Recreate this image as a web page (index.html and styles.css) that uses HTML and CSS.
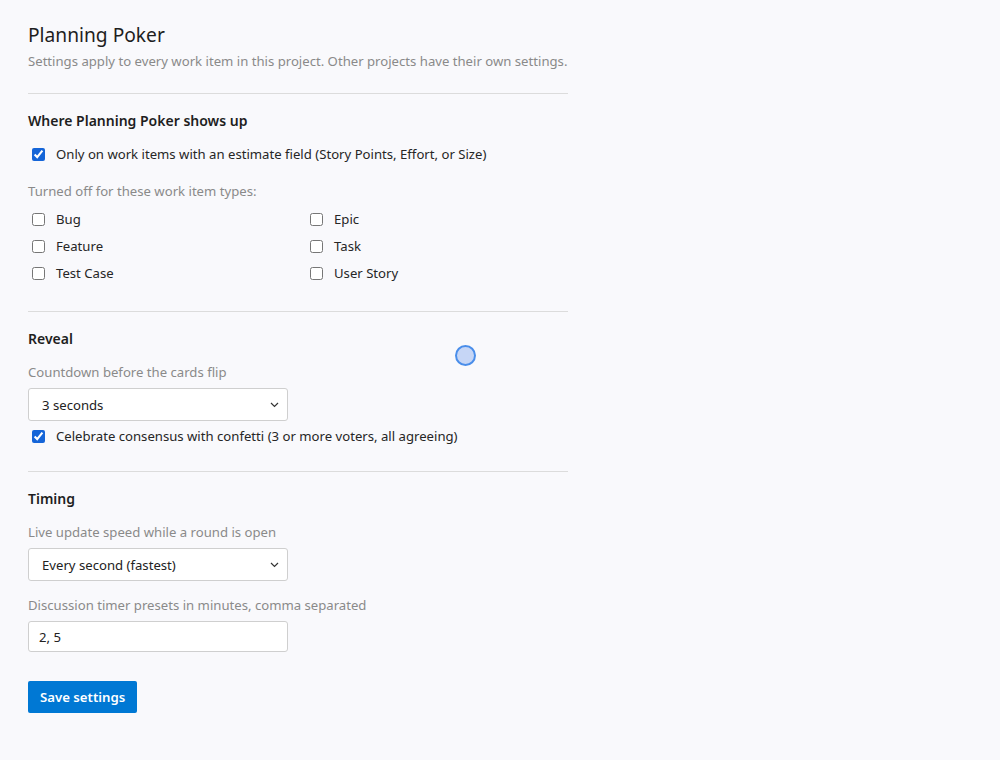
FILE: index.html
```html
<!DOCTYPE html>
<html lang="en">
<head>
    <meta charset="UTF-8">
    <meta name="viewport" content="width=device-width, initial-scale=1.0">
    <title>Planning Poker - Settings</title>
    <link rel="stylesheet" href="styles.css">
</head>
<body>

    <div class="settings">
        <h1>Planning Poker</h1>
        <p class="subtitle">Settings apply to every work item in this project. Other projects have their own settings.</p>

        <!-- Onde aparece -->
        <section class="secao">
            <h2>Where Planning Poker shows up</h2>
            <label class="check check-topo">
                <input type="checkbox" checked>
                <span>Only on work items with an estimate field (Story Points, Effort, or Size)</span>
            </label>

            <p class="rotulo rotulo-tipos">Turned off for these work item types:</p>
            <div class="tipos">
                <label class="check"><input type="checkbox"><span>Bug</span></label>
                <label class="check"><input type="checkbox"><span>Epic</span></label>
                <label class="check"><input type="checkbox"><span>Feature</span></label>
                <label class="check"><input type="checkbox"><span>Task</span></label>
                <label class="check"><input type="checkbox"><span>Test Case</span></label>
                <label class="check"><input type="checkbox"><span>User Story</span></label>
            </div>
        </section>

        <!-- Revelar -->
        <section class="secao">
            <h2>Reveal</h2>
            <label class="rotulo" for="countdown">Countdown before the cards flip</label>
            <div class="select-box">
                <select id="countdown">
                    <option>No countdown</option>
                    <option selected>3 seconds</option>
                    <option>5 seconds</option>
                </select>
                <svg class="chevron" width="9" height="6" viewBox="0 0 9 6"><path d="M1 1l3.5 3.5L8 1" fill="none" stroke="#333" stroke-width="1.2"/></svg>
            </div>
            <label class="check check-confete">
                <input type="checkbox" checked>
                <span>Celebrate consensus with confetti (3 or more voters, all agreeing)</span>
            </label>
        </section>

        <!-- Tempo -->
        <section class="secao ultima">
            <h2>Timing</h2>
            <label class="rotulo" for="velocidade">Live update speed while a round is open</label>
            <div class="select-box">
                <select id="velocidade">
                    <option selected>Every second (fastest)</option>
                    <option>Every 3 seconds</option>
                    <option>Every 10 seconds</option>
                </select>
                <svg class="chevron" width="9" height="6" viewBox="0 0 9 6"><path d="M1 1l3.5 3.5L8 1" fill="none" stroke="#333" stroke-width="1.2"/></svg>
            </div>

            <label class="rotulo rotulo-presets" for="presets">Discussion timer presets in minutes, comma separated</label>
            <input type="text" id="presets" class="campo" value="2, 5">
        </section>

        <button class="salvar">Save settings</button>
    </div>

    <!-- indicador de clique -->
    <div class="clique"></div>

</body>
</html>
```

FILE: styles.css
```css
body {
    margin: 0;
    background-color: #f9f9fc;
    font-family: "Noto Sans", "Open Sans", sans-serif;
    color: #222;
}

.settings {
    width: 540px;
    padding: 21px 28px 40px;
}

h1 {
    margin: 0;
    font-size: 19.2px;
    font-weight: 400;
    line-height: 28px;
    color: #1e1e1e;
}

.subtitle {
    margin: 2px 0 0;
    font-size: 13.15px;
    line-height: 20px;
    color: #8a8a8a;
}

/* Cada bloco começa com a linha divisória */
.secao {
    border-top: 1px solid #dcdcdc;
    margin-top: 22px;
    padding-top: 16px;
    padding-bottom: 4px;
}

.secao + .secao {
    margin-top: 0;
}

.secao h2 {
    margin: 0;
    font-size: 14px;
    font-weight: 600;
    line-height: 22px;
    color: #1e1e1e;
}

.rotulo {
    display: block;
    margin: 12px 0 0;
    font-size: 13.15px;
    line-height: 20px;
    color: #8a8a8a;
}

.rotulo-tipos {
    margin-top: 17px;
}

.rotulo-presets {
    margin-top: 14px;
}

.check {
    display: flex;
    align-items: center;
    height: 20px;
    font-size: 13.15px;
    line-height: 20px;
    color: #262626;
}

.check input {
    width: 13px;
    height: 13px;
    margin: 0 11px 0 4px;
    accent-color: #1565d8;
}

.check-topo {
    margin-top: 12px;
}

.check-confete {
    margin-top: 5px;
    margin-bottom: 21px;
}

/* Tipos de item em duas colunas */
.tipos {
    display: grid;
    grid-template-columns: 1fr 1fr;
    column-gap: 16px;
    row-gap: 7px;
    margin-top: 8px;
    margin-bottom: 24px;
}

.select-box {
    position: relative;
    width: 260px;
    margin-top: 6px;
}

.select-box select {
    appearance: none;
    width: 260px;
    height: 33px;
    padding: 0 30px 0 13px;
    border: 1px solid #cfcfcf;
    border-radius: 3px;
    background-color: #fff;
    font-family: inherit;
    font-size: 13.15px;
    color: #222;
}

.chevron {
    position: absolute;
    right: 9px;
    top: 14px;
}

.campo {
    display: block;
    box-sizing: border-box;
    width: 260px;
    height: 31px;
    margin-top: 6px;
    padding: 0 10px;
    border: 1px solid #cfcfcf;
    border-radius: 3px;
    background-color: #fff;
    font-family: inherit;
    font-size: 13.15px;
    color: #222;
}

.ultima {
    padding-bottom: 0;
}

.salvar {
    margin-top: 29px;
    height: 32px;
    padding: 0 12px;
    border: none;
    border-radius: 2px;
    background-color: #0078d4;
    color: white;
    font-family: inherit;
    font-size: 13.2px;
    font-weight: 600;
}

.clique {
    position: absolute;
    left: 455px;
    top: 345px;
    width: 17px;
    height: 17px;
    border: 2px solid #4a8eea;
    border-radius: 50%;
    background-color: #c6d6f6;
}
```
